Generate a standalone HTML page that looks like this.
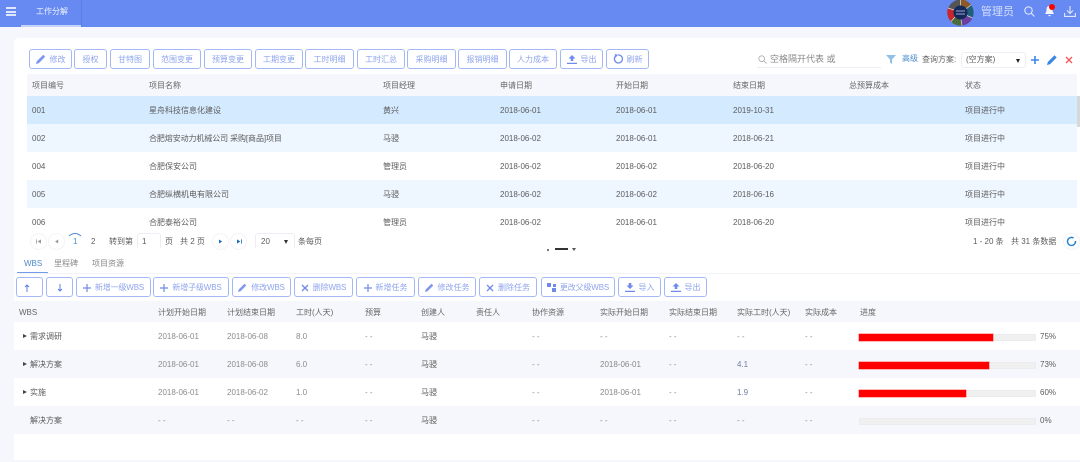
<!DOCTYPE html>
<html lang="zh-CN">
<head>
<meta charset="utf-8">
<title>工作分解</title>
<style>
html,body{margin:0;padding:0;background:#f6f7fc}
body{position:relative;width:1080px;height:462px;overflow:hidden;background:#f6f7fc;font-family:"Liberation Sans","Noto Sans CJK SC",sans-serif;font-size:8px;color:#5c5c5c;filter:blur(.3px)}
.b,.t,.btn,svg{position:absolute}
.t{line-height:12px;white-space:nowrap;margin-top:1px}
.h{color:#666}
.d{color:#8c8c8c}
.btn{box-sizing:border-box;height:20px;border:1px solid #a5b8f6;border-radius:3px;background:#fff;color:#8ea4ee;line-height:19px;text-align:center;white-space:nowrap}
.btn svg{position:static;vertical-align:-2px;margin-right:4px}
.c{position:absolute;box-sizing:border-box;width:17px;height:17px;border:1px solid #f4f4f7;border-radius:50%;background:#fff}
.bar{position:absolute;left:859px;width:177px;height:7px;box-sizing:border-box;background:#f0f0f0;border:1px solid #ececec}
.fill{position:absolute;left:859px;height:7px;background:#f00;box-shadow:0 0 0 .5px #ff7070}
.ar{position:absolute;left:23px;width:0;height:0;border-left:4px solid #444;border-top:2.5px solid transparent;border-bottom:2.5px solid transparent}
</style>
</head>
<body>
<!-- header -->
<div class="b" style="left:0;top:0;width:1080px;height:27px;background:#678af2"></div>
<div class="b" style="left:6px;top:7px;width:10px;height:2px;background:#dfe6fd"></div>
<div class="b" style="left:6px;top:11px;width:10px;height:2px;background:#dfe6fd"></div>
<div class="b" style="left:6px;top:14px;width:10px;height:2px;background:#dfe6fd"></div>
<div class="b" style="left:81px;top:0;width:1px;height:27px;background:#5a7ce6"></div>
<div class="b" style="left:21px;top:25px;width:60px;height:2px;background:#c5d2fa"></div>
<div class="t" style="left:36px;top:5px;color:#eef2ff">工作分解</div>
<svg style="left:947px;top:-1px" width="27" height="27" viewBox="0 0 27 27">
<circle cx="13.5" cy="13.5" r="13" fill="#555"/>
<path d="M13.5 .5A13 13 0 0 1 24 6L19 10A7 7 0 0 0 13.500 6.500Z" fill="#8a5a2b"/>
<path d="M24 6A13 13 0 0 1 25.500 19L20 16.500A7 7 0 0 0 19 10Z" fill="#1f5f7a"/>
<path d="M25.500 19A13 13 0 0 1 15 26.500L14 20.500A7 7 0 0 0 20 16.500Z" fill="#6b3fa0"/>
<path d="M15 26.500A13 13 0 0 1 4 22.500L8 18A7 7 0 0 0 14 20.500Z" fill="#4a6b3a"/>
<path d="M4 22.500A13 13 0 0 1 1 9L7 11A7 7 0 0 0 8 18Z" fill="#c8262b"/>
<path d="M13.500 .5V6.500M24 6L19 10M25.500 19L20 16.500M15 26.500L14 20.500M4 22.500L8 18M1 9L7 11" stroke="#ddd" stroke-width=".7"/>
<circle cx="13.5" cy="13.5" r="7" fill="#14285c"/>
<path d="M9 12H18M9 15H18" stroke="#c9d2ea" stroke-width=".8"/>
</svg>
<div class="t" style="left:981px;top:4px;font-size:11px;line-height:14px;color:#d5dffc">管理员</div>
<svg style="left:1024px;top:6px" width="11" height="11" viewBox="0 0 11 11" fill="none" stroke="#dfe6fd" stroke-width="1.100"><circle cx="4.500" cy="4.500" r="3.700"/><path d="M7.200 7.200L10.500 10.500"/></svg>
<svg style="left:1044px;top:5px" width="11" height="12" viewBox="0 0 11 12"><path d="M5.500 1C3 1 2.500 3 2.500 5C2.500 7 1.500 8 1 9H10C9.500 8 8.500 7 8.500 5C8.500 3 8 1 5.500 1ZM4 10H7L5.500 11.500Z" fill="#f3f6ff"/></svg>
<div class="b" style="left:1049px;top:4px;width:6px;height:6px;border-radius:50%;background:#f00"></div>
<svg style="left:1064px;top:6px" width="12" height="11" viewBox="0 0 12 11" fill="none" stroke="#dfe6fd" stroke-width="1.100"><path d="M6 0V7M3 4.500L6 7.500L9 4.500M.6 7V10.400H11.400V7"/></svg>

<!-- cards -->
<div class="b" style="left:14px;top:38px;width:1066px;height:263px;background:#fff;border-radius:4px 0 0 0"></div>
<div class="b" style="left:14px;top:322px;width:1066px;height:138px;background:#fff"></div>

<!-- top toolbar -->
<div class="btn" style="left:29px;top:49px;width:43px"><svg width="10" height="10" viewBox="0 0 9 9"><path d="M0 9L.7 6.500L6.500 .7L8.300 2.500L2.500 8.300Z" fill="#7f97ec"/></svg>修改</div>
<div class="btn" style="left:74px;top:49px;width:33px">授权</div>
<div class="btn" style="left:110px;top:49px;width:40px">甘特图</div>
<div class="btn" style="left:153px;top:49px;width:48px">范围变更</div>
<div class="btn" style="left:204px;top:49px;width:48px">预算变更</div>
<div class="btn" style="left:255px;top:49px;width:48px">工期变更</div>
<div class="btn" style="left:305px;top:49px;width:49px">工时明细</div>
<div class="btn" style="left:357px;top:49px;width:48px">工时汇总</div>
<div class="btn" style="left:407px;top:49px;width:49px">采购明细</div>
<div class="btn" style="left:458px;top:49px;width:49px">报销明细</div>
<div class="btn" style="left:509px;top:49px;width:48px">人力成本</div>
<div class="btn" style="left:560px;top:49px;width:43px"><svg width="10" height="9" viewBox="0 0 10 9"><path d="M5 0L8.500 3.500H6.300V6H3.700V3.500H1.500ZM0 7.800H10V9H0Z" fill="#6f8aea"/></svg>导出</div>
<div class="btn" style="left:606px;top:49px;width:43px"><svg width="10" height="10" viewBox="0 0 10 10" fill="none"><path d="M3 1.800A4 4 0 1 0 5 1" stroke="#6f8aea" stroke-width="1.300"/><path d="M1.500 0L5 0.800L2.800 3.500Z" fill="#6f8aea"/></svg>刷新</div>

<svg style="left:758px;top:55px" width="9" height="9" viewBox="0 0 11 11" fill="none" stroke="#aaa"><circle cx="4.500" cy="4.500" r="3.500"/><path d="M7 7L10.500 10.500"/></svg>
<div class="t" style="left:770px;top:52px;color:#888;font-size:9px">空格隔开代表 或</div>
<div class="b" style="left:757px;top:67px;width:124px;height:1px;background:#eceef3"></div>
<svg style="left:886px;top:55px" width="10" height="9" viewBox="0 0 10 9"><path d="M0 0H10L6 4.500V9L4 7.500V4.500Z" fill="#8fc0e8"/></svg>
<div class="t" style="left:902px;top:52px;color:#4a8bc9">高级</div>
<div class="t" style="left:922px;top:53px;color:#666">查询方案:</div>
<div class="b" style="left:961px;top:52px;width:65px;height:16px;box-sizing:border-box;border:1px solid #eceef3;border-radius:3px;background:#fff"></div>
<div class="t" style="left:966px;top:53px">(空方案)</div>
<div class="b" style="left:1016px;top:59px;width:0;height:0;border-top:4px solid #222;border-left:2.500px solid transparent;border-right:2.500px solid transparent"></div>
<svg style="left:1031px;top:56px" width="8" height="8" viewBox="0 0 8 8"><path d="M3.200 0H4.800V3.200H8V4.800H4.800V8H3.200V4.800H0V3.200H3.200Z" fill="#3a86e8"/></svg>
<svg style="left:1047px;top:55px" width="10" height="10" viewBox="0 0 10 10"><path d="M0 10L.8 7L7.500 .3L9.700 2.500L3 9.200Z" fill="#3a86e8"/></svg>
<svg style="left:1065px;top:56px" width="8" height="8" viewBox="0 0 8 8" stroke="#f25a5a" stroke-width="1.400"><path d="M1 1L7 7M7 1L1 7"/></svg>

<!-- main table -->
<div class="b" style="left:27px;top:74px;width:1050px;height:22px;background:#f6f7fc"></div>
<div class="b" style="left:27px;top:96px;width:1050px;height:28px;background:#d4eaff"></div>
<div class="b" style="left:27px;top:124px;width:1050px;height:28px;background:#eef6ff"></div>
<div class="b" style="left:27px;top:180px;width:1050px;height:28px;background:#eef6ff"></div>
<div class="b" style="left:1077px;top:96px;width:3px;height:31px;background:#d8d8d8"></div>

<div class="t h" style="left:32px;top:79px">项目编号</div>
<div class="t h" style="left:149px;top:79px">项目名称</div>
<div class="t h" style="left:383px;top:79px">项目经理</div>
<div class="t h" style="left:500px;top:79px">申请日期</div>
<div class="t h" style="left:616px;top:79px">开始日期</div>
<div class="t h" style="left:733px;top:79px">结束日期</div>
<div class="t h" style="left:849px;top:79px">总预算成本</div>
<div class="t h" style="left:965px;top:79px">状态</div>

<div class="t" style="left:32px;top:104px">001</div>
<div class="t" style="left:149px;top:104px">星舟科技信息化建设</div>
<div class="t" style="left:383px;top:104px">黄兴</div>
<div class="t" style="left:500px;top:104px">2018-06-01</div>
<div class="t" style="left:616px;top:104px">2018-06-01</div>
<div class="t" style="left:733px;top:104px">2019-10-31</div>
<div class="t" style="left:965px;top:104px">项目进行中</div>

<div class="t" style="left:32px;top:132px">002</div>
<div class="t" style="left:149px;top:132px;letter-spacing:-.1px">合肥熔安动力机械公司 采购[商品]项目</div>
<div class="t" style="left:383px;top:132px">马骎</div>
<div class="t" style="left:500px;top:132px">2018-06-02</div>
<div class="t" style="left:616px;top:132px">2018-06-01</div>
<div class="t" style="left:733px;top:132px">2018-06-21</div>
<div class="t" style="left:965px;top:132px">项目进行中</div>

<div class="t" style="left:32px;top:160px">004</div>
<div class="t" style="left:149px;top:160px">合肥保安公司</div>
<div class="t" style="left:383px;top:160px">管理员</div>
<div class="t" style="left:500px;top:160px">2018-06-02</div>
<div class="t" style="left:616px;top:160px">2018-06-02</div>
<div class="t" style="left:733px;top:160px">2018-06-20</div>
<div class="t" style="left:965px;top:160px">项目进行中</div>

<div class="t" style="left:32px;top:188px">005</div>
<div class="t" style="left:149px;top:188px">合肥纵横机电有限公司</div>
<div class="t" style="left:383px;top:188px">马骎</div>
<div class="t" style="left:500px;top:188px">2018-06-02</div>
<div class="t" style="left:616px;top:188px">2018-06-02</div>
<div class="t" style="left:733px;top:188px">2018-06-16</div>
<div class="t" style="left:965px;top:188px">项目进行中</div>

<div class="t" style="left:32px;top:216px">006</div>
<div class="t" style="left:149px;top:216px">合肥泰裕公司</div>
<div class="t" style="left:383px;top:216px">管理员</div>
<div class="t" style="left:500px;top:216px">2018-06-02</div>
<div class="t" style="left:616px;top:216px">2018-06-01</div>
<div class="t" style="left:733px;top:216px">2018-06-20</div>
<div class="t" style="left:965px;top:216px">项目进行中</div>

<!-- pagination -->
<div class="b" style="left:14px;top:233px;width:1066px;height:15px;background:#fff"></div>
<div class="c" style="left:30px;top:233px"></div>
<div class="c" style="left:48px;top:233px"></div>
<div class="c" style="left:212px;top:233px"></div>
<div class="c" style="left:230px;top:233px"></div>
<svg style="left:36px;top:239px" width="5" height="5" viewBox="0 0 6 6" fill="#999"><path d="M0 .5H1V5.500H0ZM6 .5V5.500L2 3Z"/></svg>
<svg style="left:55px;top:239px" width="4" height="5" viewBox="0 0 5 6" fill="#999"><path d="M4 .5V5.500L0 3Z"/></svg>
<svg style="left:219px;top:239px" width="4" height="5" viewBox="0 0 5 6" fill="#1f6fb8"><path d="M0 .5V5.500L4 3Z"/></svg>
<svg style="left:237px;top:239px" width="5" height="5" viewBox="0 0 6 6" fill="#1f6fb8"><path d="M0 .5V5.500L4 3ZM5 .5H6V5.500H5Z"/></svg>
<svg style="left:67px;top:232px" width="16" height="5" viewBox="0 0 16 5" fill="none" stroke="#4a8bc9"><path d="M2 4Q8 -1 14 4"/></svg>
<div class="t" style="left:73px;top:235px;color:#4a8bc9">1</div>
<div class="t" style="left:91px;top:235px">2</div>
<div class="t" style="left:109px;top:235px">转到第</div>
<div class="b" style="left:137px;top:233px;width:24px;height:15px;box-sizing:border-box;border:1px solid #eceef3;border-bottom:0;border-radius:3px 3px 0 0"></div>
<div class="t" style="left:142px;top:235px">1</div>
<div class="t" style="left:165px;top:235px">页</div>
<div class="t" style="left:180px;top:235px">共 2 页</div>
<div class="b" style="left:255px;top:233px;width:40px;height:15px;box-sizing:border-box;border:1px solid #eceef3;border-bottom:0;border-radius:3px 3px 0 0"></div>
<div class="t" style="left:261px;top:235px">20</div>
<div class="b" style="left:284px;top:240px;width:0;height:0;border-top:4px solid #333;border-left:2.500px solid transparent;border-right:2.500px solid transparent"></div>
<div class="t" style="left:298px;top:235px">条每页</div>
<div class="t" style="left:973px;top:235px">1 - 20 条</div>
<div class="t" style="left:1011px;top:235px">共 31 条数据</div>
<div class="c" style="left:1063px;top:233px"></div>
<svg style="left:1066px;top:236px" width="11" height="11" viewBox="0 0 11 11" fill="none"><path d="M3.500 2A4 4 0 1 0 7 1.800" stroke="#2a86cf" stroke-width="1.500" transform="rotate(60 5.500 5.500)"/></svg>

<!-- splitter -->
<div class="b" style="left:547px;top:249px;width:2px;height:2px;background:#777"></div>
<div class="b" style="left:555px;top:248px;width:13px;height:2px;background:#333"></div>
<div class="b" style="left:572px;top:248px;width:0;height:0;border-top:3px solid #555;border-left:2px solid transparent;border-right:2px solid transparent"></div>

<!-- tabs -->
<div class="t" style="left:24px;top:257px;color:#4a8bc9">WBS</div>
<div class="t" style="left:54px;top:257px;color:#888">里程碑</div>
<div class="t" style="left:92px;top:257px;color:#888">项目资源</div>
<div class="b" style="left:14px;top:273px;width:1066px;height:1px;background:#f3f4f8"></div>
<div class="b" style="left:17px;top:272px;width:31px;height:1px;background:#6f9be8"></div>

<!-- wbs toolbar -->
<div class="btn" style="left:16px;top:277px;width:27px;padding-right:5px"><svg style="margin:0" width="6" height="8" viewBox="0 0 6 8" fill="none" stroke="#5f7fe8"><path d="M3 8V1M1 3L3 1L5 3"/></svg></div>
<div class="btn" style="left:46px;top:277px;width:27px"><svg style="margin:0" width="6" height="8" viewBox="0 0 6 8" fill="none" stroke="#5f7fe8"><path d="M3 0V7M1 5L3 7L5 5"/></svg></div>
<div class="btn" style="left:76px;top:277px;width:75px;letter-spacing:-.15px"><svg width="8" height="8" viewBox="0 0 8 8"><path d="M3.400 0H4.600V3.400H8V4.600H4.600V8H3.400V4.600H0V3.400H3.400Z" fill="#6f8aea"/></svg>新增一级WBS</div>
<div class="btn" style="left:153px;top:277px;width:76px;letter-spacing:-.15px"><svg width="8" height="8" viewBox="0 0 8 8"><path d="M3.400 0H4.600V3.400H8V4.600H4.600V8H3.400V4.600H0V3.400H3.400Z" fill="#6f8aea"/></svg>新增子级WBS</div>
<div class="btn" style="left:232px;top:277px;width:59px;letter-spacing:-.15px"><svg width="9" height="9" viewBox="0 0 9 9"><path d="M0 9L.7 6.500L6.500 .7L8.300 2.500L2.500 8.300Z" fill="#7f97ec"/></svg>修改WBS</div>
<div class="btn" style="left:294px;top:277px;width:59px;letter-spacing:-.15px"><svg width="8" height="8" viewBox="0 0 8 8" stroke="#6f8aea" stroke-width="1.300"><path d="M1 1L7 7M7 1L1 7"/></svg>删除WBS</div>
<div class="btn" style="left:356px;top:277px;width:59px"><svg width="8" height="8" viewBox="0 0 8 8"><path d="M3.400 0H4.600V3.400H8V4.600H4.600V8H3.400V4.600H0V3.400H3.400Z" fill="#6f8aea"/></svg>新增任务</div>
<div class="btn" style="left:418px;top:277px;width:58px"><svg width="9" height="9" viewBox="0 0 9 9"><path d="M0 9L.7 6.500L6.500 .7L8.300 2.500L2.500 8.300Z" fill="#7f97ec"/></svg>修改任务</div>
<div class="btn" style="left:479px;top:277px;width:58px"><svg width="8" height="8" viewBox="0 0 8 8" stroke="#6f8aea" stroke-width="1.300"><path d="M1 1L7 7M7 1L1 7"/></svg>删除任务</div>
<div class="btn" style="left:541px;top:277px;width:74px;letter-spacing:-.15px"><svg width="9" height="9" viewBox="0 0 9 9" fill="#6f8aea"><path d="M0 0H4V4H0ZM6 1H9V4H6ZM5 5H9V9H5Z"/></svg>更改父级WBS</div>
<div class="btn" style="left:618px;top:277px;width:43px"><svg width="10" height="9" viewBox="0 0 10 9"><path d="M3.700 0H6.300V2.500H8.500L5 6L1.500 2.500H3.700ZM0 7.800H10V9H0Z" fill="#6f8aea"/></svg>导入</div>
<div class="btn" style="left:664px;top:277px;width:43px"><svg width="10" height="9" viewBox="0 0 10 9"><path d="M5 0L8.500 3.500H6.300V6H3.700V3.500H1.500ZM0 7.800H10V9H0Z" fill="#6f8aea"/></svg>导出</div>

<!-- wbs table -->
<div class="b" style="left:0;top:301px;width:1080px;height:21px;background:#f6f7fc"></div>
<div class="b" style="left:14px;top:350px;width:1066px;height:28px;background:#f6f7fc"></div>
<div class="b" style="left:14px;top:406px;width:1066px;height:28px;background:#f6f7fc"></div>

<div class="t h" style="left:19px;top:306px">WBS</div>
<div class="t h" style="left:158px;top:306px">计划开始日期</div>
<div class="t h" style="left:227px;top:306px">计划结束日期</div>
<div class="t h" style="left:296px;top:306px">工时(人天)</div>
<div class="t h" style="left:365px;top:306px">预算</div>
<div class="t h" style="left:421px;top:306px">创建人</div>
<div class="t h" style="left:476px;top:306px">责任人</div>
<div class="t h" style="left:532px;top:306px">协作资源</div>
<div class="t h" style="left:600px;top:306px">实际开始日期</div>
<div class="t h" style="left:669px;top:306px">实际结束日期</div>
<div class="t h" style="left:737px;top:306px">实际工时(人天)</div>
<div class="t h" style="left:805px;top:306px">实际成本</div>
<div class="t h" style="left:860px;top:306px">进度</div>

<div class="ar" style="top:334px"></div>
<div class="t" style="left:30px;top:330px">需求调研</div>
<div class="t d" style="left:158px;top:330px">2018-06-01</div>
<div class="t d" style="left:227px;top:330px">2018-06-08</div>
<div class="t d" style="left:296px;top:330px">8.0</div>
<div class="t d" style="left:365px;top:330px">- -</div>
<div class="t" style="left:421px;top:330px">马骎</div>
<div class="t d" style="left:532px;top:330px">- -</div>
<div class="t d" style="left:600px;top:330px">- -</div>
<div class="t d" style="left:669px;top:330px">- -</div>
<div class="t d" style="left:737px;top:330px">- -</div>
<div class="t d" style="left:805px;top:330px">- -</div>
<div class="bar" style="top:334px"></div><div class="fill" style="top:334px;width:134px"></div>
<div class="t" style="left:1040px;top:330px">75%</div>

<div class="ar" style="top:362px"></div>
<div class="t" style="left:30px;top:358px">解决方案</div>
<div class="t d" style="left:158px;top:358px">2018-06-01</div>
<div class="t d" style="left:227px;top:358px">2018-06-08</div>
<div class="t d" style="left:296px;top:358px">6.0</div>
<div class="t d" style="left:365px;top:358px">- -</div>
<div class="t" style="left:421px;top:358px">马骎</div>
<div class="t d" style="left:532px;top:358px">- -</div>
<div class="t" style="left:600px;top:358px;color:#888">2018-06-01</div>
<div class="t d" style="left:669px;top:358px">- -</div>
<div class="t" style="left:737px;top:358px;color:#6f7f9f">4.1</div>
<div class="t d" style="left:805px;top:358px">- -</div>
<div class="bar" style="top:362px"></div><div class="fill" style="top:362px;width:130px"></div>
<div class="t" style="left:1040px;top:358px">73%</div>

<div class="ar" style="top:390px"></div>
<div class="t" style="left:30px;top:386px">实施</div>
<div class="t d" style="left:158px;top:386px">2018-06-01</div>
<div class="t d" style="left:227px;top:386px">2018-06-02</div>
<div class="t d" style="left:296px;top:386px">1.0</div>
<div class="t d" style="left:365px;top:386px">- -</div>
<div class="t" style="left:421px;top:386px">马骎</div>
<div class="t d" style="left:532px;top:386px">- -</div>
<div class="t" style="left:600px;top:386px;color:#888">2018-06-01</div>
<div class="t d" style="left:669px;top:386px">- -</div>
<div class="t" style="left:737px;top:386px;color:#6f7f9f">1.9</div>
<div class="t d" style="left:805px;top:386px">- -</div>
<div class="bar" style="top:390px"></div><div class="fill" style="top:390px;width:107px"></div>
<div class="t" style="left:1040px;top:386px">60%</div>

<div class="t" style="left:30px;top:414px">解决方案</div>
<div class="t d" style="left:158px;top:414px">- -</div>
<div class="t d" style="left:227px;top:414px">- -</div>
<div class="t d" style="left:296px;top:414px">- -</div>
<div class="t d" style="left:365px;top:414px">- -</div>
<div class="t" style="left:421px;top:414px">马骎</div>
<div class="t d" style="left:532px;top:414px">- -</div>
<div class="t d" style="left:600px;top:414px">- -</div>
<div class="t d" style="left:669px;top:414px">- -</div>
<div class="t d" style="left:737px;top:414px">- -</div>
<div class="t d" style="left:805px;top:414px">- -</div>
<div class="bar" style="top:418px"></div>
<div class="t" style="left:1040px;top:414px">0%</div>
</body>
</html>
